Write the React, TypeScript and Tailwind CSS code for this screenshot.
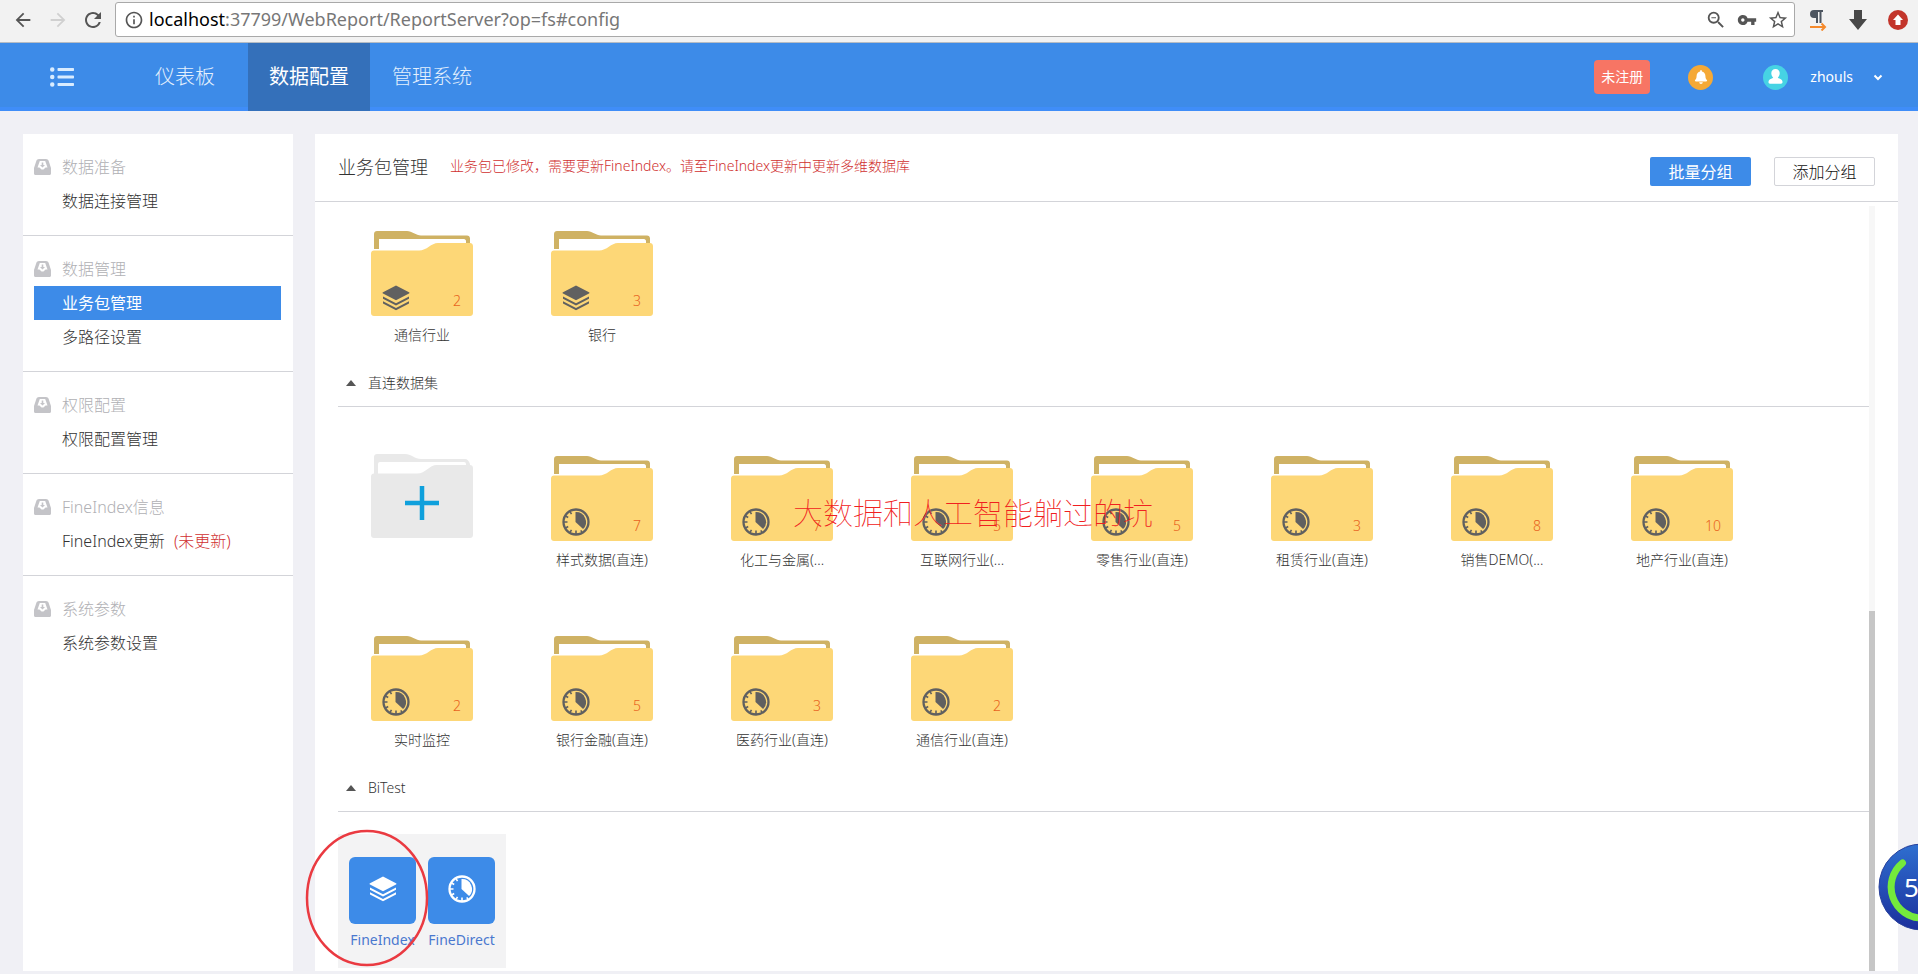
import { clsx } from "clsx"
import { FaBell, FaListUl } from "react-icons/fa"
import {
  MdArrowBack,
  MdArrowForward,
  MdInfoOutline,
  MdRefresh,
  MdStarBorder,
  MdVpnKey,
  MdZoomOut,
} from "react-icons/md"

type Kind = "index" | "direct"

type Pack = {
  name: string
  count: number
  kind: Kind
}

const menu = [
  { title: "数据准备", items: [{ label: "数据连接管理" }] },
  { title: "数据管理", items: [{ label: "业务包管理", active: true }, { label: "多路径设置" }] },
  { title: "权限配置", items: [{ label: "权限配置管理" }] },
  { title: "FineIndex信息", items: [{ label: "FineIndex更新", note: "(未更新)" }] },
  { title: "系统参数", items: [{ label: "系统参数设置" }] },
] as { title: string; items: { label: string; active?: boolean; note?: string }[] }[]

const indexPacks: Pack[] = [
  { name: "通信行业", count: 2, kind: "index" },
  { name: "银行", count: 3, kind: "index" },
]

const directPacks: Pack[] = [
  { name: "样式数据(直连)", count: 7, kind: "direct" },
  { name: "化工与金属(...", count: 7, kind: "direct" },
  { name: "互联网行业(...", count: 5, kind: "direct" },
  { name: "零售行业(直连)", count: 5, kind: "direct" },
  { name: "租赁行业(直连)", count: 3, kind: "direct" },
  { name: "销售DEMO(...", count: 8, kind: "direct" },
  { name: "地产行业(直连)", count: 10, kind: "direct" },
  { name: "实时监控", count: 2, kind: "direct" },
  { name: "银行金融(直连)", count: 5, kind: "direct" },
  { name: "医药行业(直连)", count: 3, kind: "direct" },
  { name: "通信行业(直连)", count: 2, kind: "direct" },
]

function LayersIcon({ className }: { className?: string }) {
  return (
    <svg viewBox="0 0 28 26" className={className} fill="currentColor" aria-hidden="true">
      <path d="M14 .5 27 7.3c.6.3.6.9 0 1.2L14 15.3 1 8.500c-.6-.3-.6-.9 0-1.200z" />
      <path d="M1 11.500 14 18.300 27 11.500v2.300L14 20.600 1 13.800z" />
      <path d="M1 16.200 14 23 27 16.200v2.300L14 25.300 1 18.500z" />
    </svg>
  )
}

function ClockIcon({ className }: { className?: string }) {
  return (
    <svg viewBox="0 0 28 28" className={className} fill="none" stroke="currentColor" aria-hidden="true">
      <circle cx="14" cy="14" r="12.500" strokeWidth="2.300" />
      <path d="M13.500 4a10 10 0 0 1 7.600 17L13.500 14z" fill="currentColor" stroke="none" />
      <path d="M14 26v-3.500M2 14h3.500M8 24.400l1.500-2.600M3.600 20l2.600-1.500M3.600 8l2.600 1.500M8 3.600l1.500 2.600M20 24.400l-1.200-2" strokeWidth="1.600" />
    </svg>
  )
}

function DriveIcon() {
  return (
    <svg viewBox="0 0 17 16" className="h-4 w-[17px] text-[#c4c4c8]" aria-hidden="true">
      <path
        fill="currentColor"
        fillRule="evenodd"
        d="M5 0h7c1.300 0 2.200.7 2.600 1.800L17 9v5.500c0 .9-.6 1.500-1.500 1.500h-14C.6 16 0 15.400 0 14.500V9l2.400-7.200C2.800.7 3.700 0 5 0zm.8 2L3.500 8.500H5c.7 0 1 .2 1.300.8.4.8 1.200 1.200 2.200 1.200s1.800-.4 2.200-1.200c.3-.6.6-.8 1.300-.8h1.500L11.200 2z"
      />
      <path fill="currentColor" d="M7.700 3.500h1.600V6H11L8.500 8.500 6 6h1.700z" />
    </svg>
  )
}

function FolderShape() {
  return (
    <svg viewBox="0 0 102 86" className="h-[86px] w-[102px]" aria-hidden="true">
      <path fill="#cfb264" d="M3 24V3c0-1.700 1.300-3 3-3h30c5 0 9 4.500 14 4.500h46c1.700 0 3 1.300 3 3V18H3z" />
      <path fill="#fff" d="M8 8h85c1 0 2 1 2 2v14H8z" />
      <path
        fill="#fdd777"
        d="M3 19.500h45c8 0 12-7.500 19-7.500h32c1.700 0 3 1.300 3 3v67c0 1.700-1.300 3-3 3H3c-1.700 0-3-1.300-3-3V22.500c0-1.700 1.300-3 3-3z"
      />
    </svg>
  )
}

function AddFolder() {
  return (
    <button type="button" aria-label="添加业务包" className="h-[86px] w-[102px]">
      <svg viewBox="0 2 102 86" className="h-[86px] w-[102px] overflow-visible" aria-hidden="true">
        <path fill="#e9e9e9" d="M3 24V3c0-1.700 1.300-3 3-3h28c6 0 10 5 16 5h44c2.500 0 4 2 5 5v10H3z" />
        <rect x="7" y="8" width="88" height="14" rx="2" fill="#fff" />
        <path
          fill="#e9e9e9"
          d="M3 19.500h43c9 0 12-8.500 20-8.500h33c1.700 0 3 1.300 3 3v67c0 1.700-1.300 3-3 3H3c-1.700 0-3-1.300-3-3V22.500c0-1.700 1.300-3 3-3z"
        />
        <path d="M34 49h34M51 32v34" stroke="#0fa0dc" strokeWidth="4.500" />
      </svg>
    </button>
  )
}

function Folder({ pack }: { pack: Pack }) {
  return (
    <button type="button" className="block w-[102px] text-center">
      <span className="relative block">
        <FolderShape />
        {pack.kind === "index" ? (
          <LayersIcon className="absolute bottom-[6px] left-[11px] h-[26px] w-7 text-[#606060]" />
        ) : (
          <ClockIcon className="absolute bottom-[6px] left-[11px] h-7 w-7 text-[#606060]" />
        )}
        <span className="absolute right-3 bottom-[6px] text-sm text-[#e8641e]">{pack.count}</span>
      </span>
      <span className="mt-2 block text-sm whitespace-nowrap">{pack.name}</span>
    </button>
  )
}

function GroupHeader({ title }: { title: string }) {
  return (
    <button type="button" className="mt-7 flex h-[34px] w-full items-start border-b border-[#d3d4d9] pl-2 text-sm">
      <svg viewBox="0 0 10 6" className="mt-[7px] mr-3 h-[6px] w-[10px]" fill="#555" aria-hidden="true">
        <path d="M5 0l5 6H0z" />
      </svg>
      {title}
    </button>
  )
}

function BrowserBar() {
  return (
    <div className="flex h-[43px] items-start border-b border-[#b5bcc4] bg-[#f2f2f2] pt-[2px] text-[#555]">
      <div className="flex h-[35px] w-[115px] items-center justify-between pr-[10px] pl-3">
        <button type="button" aria-label="后退"><MdArrowBack className="size-[22px]" /></button>
        <button type="button" aria-label="前进"><MdArrowForward className="size-[22px] text-[#d0d0d0]" /></button>
        <button type="button" aria-label="刷新"><MdRefresh className="size-6" /></button>
      </div>
      <div className="flex h-[35px] flex-1 items-center rounded-[3px] border border-[#a9a9a9] bg-white pr-[5px] pl-2">
        <MdInfoOutline className="size-5" />
        <div role="textbox" aria-label="地址" className="ml-[5px] flex-1 pb-[2px] text-lg font-normal text-[#777]">
          <span className="text-black">localhost</span>:37799/WebReport/ReportServer?op=fs#config
        </div>
        <div className="flex items-center gap-[10px]">
          <button type="button" aria-label="缩小"><MdZoomOut className="size-[22px]" /></button>
          <button type="button" aria-label="密码"><MdVpnKey className="size-5" /></button>
          <button type="button" aria-label="收藏"><MdStarBorder className="size-[22px]" /></button>
        </div>
      </div>
      <div className="flex h-[35px] w-[123px] items-center justify-between pr-[10px] pl-[14px]">
        <button type="button" aria-label="段落">
          <svg viewBox="0 0 18 22" className="h-[22px] w-[18px]" aria-hidden="true">
            <path fill="#4d5560" d="M5 1h9v2h-1.500v11h-2V3H9v11H7V9H5a4 4 0 0 1 0-8z" />
            <path fill="none" stroke="#f58a2c" strokeWidth="2" d="M1 18h14M12.500 14.500 16 18l-3.500 3.500" />
          </svg>
        </button>
        <button type="button" aria-label="下载">
          <svg viewBox="0 0 18 20" className="h-5 w-[18px]" fill="#484848" aria-hidden="true">
            <path d="M5 0h8v9h5L9 20 0 9h5z" />
          </svg>
        </button>
        <button type="button" aria-label="更新">
          <svg viewBox="0 0 20 20" className="size-5" aria-hidden="true">
            <circle cx="10" cy="10" r="10" fill="#c3352b" />
            <path fill="#fff" d="m10 4.500 5 5.500h-2.500v5h-5v-5H5z" />
          </svg>
        </button>
      </div>
    </div>
  )
}

function TopNav() {
  return (
    <header className="flex h-[68px] items-center bg-[#3d8be8] text-white shadow-[inset_0_-4px_0_#3f8df8]">
      <button type="button" aria-label="菜单" className="ml-[50px] text-[#d9ecff]">
        <FaListUl className="size-6" />
      </button>
      <nav className="ml-[61px] flex self-stretch text-xl text-[#e4f0fd]">
        <a href="#dashboard" className="flex items-center px-5">仪表板</a>
        <a href="#config" className="ml-[13px] flex items-center bg-[#3470ba] px-[21px] font-normal text-white">数据配置</a>
        <a href="#system" className="flex items-center px-[22px]">管理系统</a>
      </nav>
      <div className="ml-auto flex items-center font-normal">
        <button type="button" className="h-[34px] w-14 rounded-[4px] bg-[#f77564] text-sm">未注册</button>
        <button type="button" aria-label="通知" className="ml-[38px] flex size-[25px] items-center justify-center rounded-full bg-[#f5a936]">
          <FaBell className="size-[14px]" />
        </button>
        <button type="button" className="ml-[50px] flex items-center text-sm">
          <svg viewBox="0 0 25 25" className="size-[25px]" aria-hidden="true">
            <circle cx="12.500" cy="12.500" r="12.500" fill="#46d3e4" />
            <path fill="#fff" d="M12.500 4c2.600 0 4.200 1.800 4.200 4.300 0 1.700-.8 3.300-1.900 4.200.2 1 4.500 1.300 4.700 4.200.1 1.400-.3 2-1.500 2H7c-1.200 0-1.600-.6-1.500-2 .2-2.900 4.500-3.200 4.700-4.200-1.100-.9-1.900-2.500-1.900-4.200C8.300 5.800 9.900 4 12.500 4z" />
          </svg>
          <span className="ml-[22px]">zhouls</span>
          <svg viewBox="0 0 16 16" className="mr-8 ml-[17px] size-4" fill="none" stroke="currentColor" strokeWidth="2" aria-hidden="true">
            <path d="m4.500 6.500 3.500 3.500 3.500-3.500" />
          </svg>
        </button>
      </div>
    </header>
  )
}

function Sidebar() {
  return (
    <aside className="w-[270px] shrink-0 bg-white text-base">
      {menu.map((section, i) => (
        <section
          key={section.title}
          className={clsx("pt-4 pr-3 pb-[17px] pl-[11px] leading-[34px]", i < menu.length - 1 && "border-b border-[#d3d4d9]")}
        >
          <h2 className="flex items-center gap-[11px] text-[#b0b0b4]">
            <DriveIcon />
            {section.title}
          </h2>
          {section.items.map((item) => (
            <a
              key={item.label}
              href="#config"
              className={clsx("block pl-7", item.active ? "bg-[#3d8be8] font-normal text-white" : "text-[#333]")}
            >
              {item.label}
              {item.note && <span className="ml-[9px] text-[#d03030]">{item.note}</span>}
            </a>
          ))}
        </section>
      ))}
    </aside>
  )
}

function EngineOption({ kind, label }: { kind: Kind; label: string }) {
  return (
    <button type="button" className="w-[67px] text-sm font-normal text-[#4a78cf]">
      <span className="flex h-[67px] items-center justify-center rounded-[6px] bg-[#3d8be8] pb-1 text-white">
        {kind === "index" ? <LayersIcon className="h-[26px] w-7" /> : <ClockIcon className="size-7" />}
      </span>
      <span className="mt-[11px] flex h-3 items-end justify-center overflow-hidden leading-[14px]">{label}</span>
    </button>
  )
}

function Packages() {
  return (
    <main className="relative flex flex-1 flex-col bg-white text-[#333]">
      <div className="flex h-[68px] items-start border-b border-[#d3d4d9] pr-[23px] pl-[23px]">
        <h1 className="pt-[19px] text-lg">业务包管理</h1>
        <p className="ml-[22px] pt-[22px] text-sm text-[#d03030]">
          业务包已修改，需要更新FineIndex。请至FineIndex更新中更新多维数据库
        </p>
        <div className="ml-auto flex gap-[23px] pt-[23px]">
          <button type="button" className="flex h-[29px] w-[101px] items-center justify-center rounded-[2px] bg-[#3d8be8] text-base font-normal text-white">
            批量分组
          </button>
          <button type="button" className="flex h-[29px] w-[101px] items-center justify-center rounded-[2px] border border-[#d3d4d9] text-base text-[#111]">
            添加分组
          </button>
        </div>
      </div>

      <div className="flex flex-1 pr-[23px] pl-[23px]">
        <div className="flex-1">
          <div className="flex flex-wrap gap-x-[78px] gap-y-[66px] pt-[29px] pl-[33px]">
            {indexPacks.map((pack) => (
              <Folder key={pack.name} pack={pack} />
            ))}
          </div>

          <GroupHeader title="直连数据集" />
          <div className="flex flex-wrap gap-x-[78px] gap-y-[66px] pt-[49px] pl-[33px]">
            <AddFolder />
            {directPacks.map((pack) => (
              <Folder key={pack.name} pack={pack} />
            ))}
          </div>

          <GroupHeader title="BiTest" />
          <div className="mt-[22px] mb-[2px] flex h-[134px] w-[168px] items-start gap-3 bg-[#f3f3f4] px-[11px] pt-[23px]">
            <EngineOption kind="index" label="FineIndex" />
            <EngineOption kind="direct" label="FineDirect" />
          </div>
        </div>
        <div className="mt-1 flex w-[6px] flex-col justify-end bg-[#f7f7f7]">
          <div className="h-[47%] bg-[#c6c6c6]" />
        </div>
      </div>

      <p className="absolute top-[359px] left-[478px] text-[30px] leading-[40px] font-thin whitespace-nowrap text-[#f02020]">
        大数据和人工智能躺过的坑
      </p>
      <svg viewBox="0 0 124 138" className="absolute bottom-1 left-[-10px] h-[138px] w-[124px]" fill="none" aria-hidden="true">
        <ellipse cx="62" cy="69" rx="60" ry="67" stroke="#ea3a41" strokeWidth="2.500" />
      </svg>
    </main>
  )
}

function SpeedBall() {
  return (
    <div className="absolute right-0 bottom-[43px] h-[88px] w-10 overflow-hidden">
      <svg viewBox="0 0 88 88" className="size-[88px] max-w-none" aria-hidden="true">
        <defs>
          <linearGradient id="ball" x1="0" y1="0" x2="0" y2="1">
            <stop offset="0" stopColor="#2f6fd0" />
            <stop offset="1" stopColor="#1b2f9c" />
          </linearGradient>
        </defs>
        <circle cx="44" cy="44" r="43" fill="url(#ball)" stroke="#27409c" />
        <path d="M24.500 20A31 31 0 0 0 44 75" fill="none" stroke="#74ea3c" strokeWidth="7" strokeLinecap="round" />
      </svg>
      <span className="absolute top-6 left-[26px] text-[26px] leading-[40px] font-normal text-white">5</span>
    </div>
  )
}

export default function App() {
  return (
    <div className="relative flex min-h-screen flex-col overflow-hidden bg-[#f0f0f5] font-['Noto_Sans','Noto_Sans_CJK_SC',sans-serif] font-light">
      <BrowserBar />
      <TopNav />
      <div className="flex flex-1 gap-[22px] pt-[23px] pr-5 pb-[3px] pl-[23px]">
        <Sidebar />
        <Packages />
      </div>
      <SpeedBall />
    </div>
  )
}
